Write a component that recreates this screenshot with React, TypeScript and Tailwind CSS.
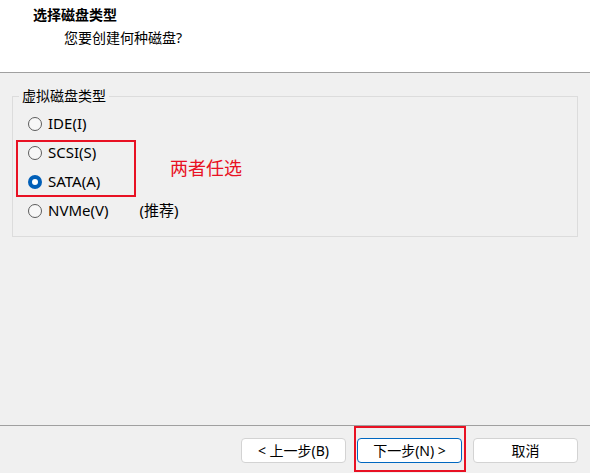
import React from 'react';

const FONT = '"Segoe UI", "Noto Sans", "Noto Sans CJK SC", sans-serif';

type Option = { id: string; label: string; note?: string };

const options: Option[] = [
    { id: 'ide', label: 'IDE(I)' },
    { id: 'scsi', label: 'SCSI(S)' },
    { id: 'sata', label: 'SATA(A)' },
    { id: 'nvme', label: 'NVMe(V)', note: '(推荐)' },
];

function Radio({ checked }: { checked: boolean }) {
    if (checked) {
        return (
            <span className="w-[14px] h-[14px] rounded-full bg-[#005fb8] flex items-center justify-center shrink-0">
                <span className="w-[6px] h-[6px] rounded-full bg-white"></span>
            </span>
        );
    }
    return <span className="w-[14px] h-[14px] rounded-full border border-[#5c5c5c] bg-[#f7f7f7] shrink-0"></span>;
}

function WizButton({ children, primary }: { children: React.ReactNode; primary?: boolean }) {
    return (
        <button
            className={
                primary
                    ? 'w-[105px] h-[25px] rounded-[4px] bg-white border border-[#0067c0] text-[14px] text-black'
                    : 'w-[105px] h-[25px] rounded-[4px] bg-white border border-[#d3d3d3] text-[14px] text-black'
            }
        >
            {children}
        </button>
    );
}

export default function App() {
    const selected = 'sata';

    return (
        <div className="w-[590px] h-[473px] flex flex-col bg-[#f0f0f0] overflow-hidden" style={{ fontFamily: FONT }}>
            {/* Header */}
            <div className="h-[73px] bg-white border-b border-[#a0a0a0] pl-[33px] pt-[5px]">
                <div className="text-[14px] font-bold text-black leading-[20px]">选择磁盘类型</div>
                <div className="text-[14px] text-black leading-[20px] pl-[31px] pt-[3px]">您要创建何种磁盘?</div>
            </div>

            {/* Body */}
            <div className="flex-1 px-[12px] pt-[14px]">
                <fieldset className="relative h-[150px] border border-[#dcdcdc] m-0 p-0">
                    <legend className="ml-[6px] px-[3px] text-[14px] text-black leading-[18px]">虚拟磁盘类型</legend>
                    <div className="flex flex-col pt-[4px] px-[15px]">
                        {options.map(opt => (
                            <label key={opt.id} className="h-[29px] flex items-center gap-[6px] text-[15px] text-black">
                                <Radio checked={opt.id === selected} />
                                <span>{opt.label}</span>
                                {opt.note && <span className="ml-[25px]">{opt.note}</span>}
                            </label>
                        ))}
                    </div>

                    {/* annotation */}
                    <div className="absolute left-[3px] top-[35px] w-[120px] h-[57px] border-2 border-[#e81123]"></div>
                    <div className="absolute left-[157px] top-[52px] text-[18px] text-[#e81123] leading-[22px]">
                        两者任选
                    </div>
                </fieldset>
            </div>

            {/* Footer */}
            <div className="h-[48px] border-t border-[#a0a0a0] flex justify-end items-start gap-[11px] pt-[12px] pr-[12px]">
                <WizButton>&lt; 上一步(B)</WizButton>
                <div className="relative">
                    <WizButton primary>下一步(N) &gt;</WizButton>
                    <div className="absolute -left-[3px] -top-[12px] -right-[4px] -bottom-[9px] border-2 border-[#e81123]"></div>
                </div>
                <WizButton>取消</WizButton>
            </div>
        </div>
    );
}
